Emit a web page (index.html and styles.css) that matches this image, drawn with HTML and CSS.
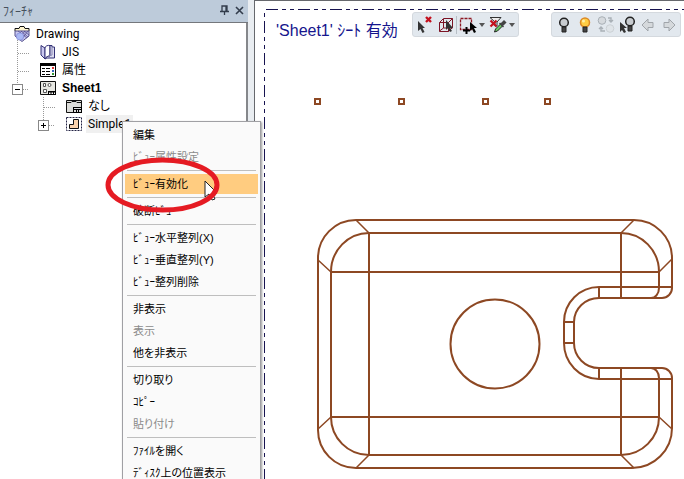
FILE: index.html
```html
<!DOCTYPE html>
<html lang="ja">
<head>
<meta charset="utf-8">
<title>Drawing</title>
<link rel="stylesheet" href="styles.css">
</head>
<body>
<div class="app">
  <aside class="panel">
    <header class="panel-head">
      <h1 class="panel-title">ﾌｨｰﾁｬ</h1>
      <button class="head-btn" type="button" aria-label="固定"><svg width="9" height="11" viewBox="0 0 9 11"><path d="M2 6V1h5v5M0 6.500h9M4.500 7v3M6 1v5" fill="none" stroke="#333d4c" stroke-width="1.300"/></svg></button>
      <button class="head-btn" type="button" aria-label="閉じる"><svg width="9" height="9" viewBox="0 0 9 9"><path d="M1 1l7 7M8 1L1 8" stroke="#333d4c" stroke-width="1.600"/></svg></button>
    </header>
    <div class="tree">
      <svg class="tree-lines" width="60" height="112" viewBox="0 0 60 112"><path d="M17.500 17v48M18 30.500h11M18 48.500h11M23 66.500h6M43.500 74v26M44 84.500h11M49 102.500h6" fill="none" stroke="#999" stroke-dasharray="1 1"/></svg>
      <ul class="nodes">
        <li class="node root"><svg class="icon" viewBox="0 0 16 16"><path d="M1 5V2.500h4l1-2h4l1 2h4V5" fill="#fff6cf" stroke="#111"/><path d="M1 5h14v5l-7 5.500L1 10z" fill="#c9c9f0" stroke="#55518d"/><path d="M4 5l9 7M7 5l7 6M10 5l5 4M14 5L7 14M11 5l-4 5M8 5L5 8" stroke="#554f91" stroke-width=".8"/><circle cx="6" cy="10.500" r="3.700" fill="#a9b8f5" stroke="#7a7fd0" stroke-width=".6"/></svg><span class="label">Drawing</span></li>
        <li class="node level1"><svg class="icon" viewBox="0 0 16 16"><path d="M1 1.500l4 2.500v11l-4-4z" fill="#cbc9ef" stroke="#333076"/><path d="M5 4c0-2 3-3 5-2.500V12c-2 0-4 1-5 3z" fill="#fff" stroke="#333076"/><path d="M10 1.500h2V3h2.500v11H9c-2 0-3 .500-4 1 1-2 3-3 5-3z" fill="#dcdcef" stroke="#333076"/><path d="M12 3v8l-3 1" fill="none" stroke="#8886b5"/></svg><span class="label">JIS</span></li>
        <li class="node level1"><svg class="icon" viewBox="0 0 16 16"><path d="M.5 1.500h15v13H.5z" fill="#fff" stroke="#000"/><path d="M0 1h16v3H0z"/><path d="M2 6.500h3M6 6.500h4M2 9.500h3M6 9.500h4M2 12.500h3M6 12.500h4" stroke="#000"/><path d="M12 5h2v2h-2z" fill="#d33"/><path d="M12 8h2v2h-2z" fill="#36b"/><path d="M12 11h2v2h-2z" fill="#393"/></svg><span class="label">属性</span></li>
        <li class="node level1"><svg class="icon" viewBox="0 0 16 16"><path d="M.5 1.500h15v13H.5z" fill="#e8e8e3" stroke="#111"/><g fill="#fff" stroke="#555"><path d="M3.500 3.500h2v3h-2zM3.500 9.500h3v3h-3z"/><circle cx="9.500" cy="5" r="1.500"/></g><path d="M8 11h8v4H8z"/><path d="M9 12.500h1.500V14H9zM11.500 12.500H13V14h-1.500zM14 12.500h1V14h-1z" fill="#fff"/></svg><span class="label strong">Sheet1</span></li>
        <li class="node level2"><svg class="icon" viewBox="0 0 16 16"><path d="M.5 2.500h15v12H.5z" fill="#ddddda" stroke="#111"/><path d="M1 4.500h4l1-1h4l1 1h4" fill="none" stroke="#111"/><path d="M7 9h9v6H7z"/><path d="M8 10h7v1H8zM8 12h2v2H8zM11 12h1v2h-1zM13 12h2v2h-2z" fill="#ddd"/></svg><span class="label">なし</span></li>
        <li class="node level2"><svg class="icon" viewBox="0 0 16 16"><path d="M.5 1.500h15v13H.5z" fill="#fff" stroke="#224" stroke-dasharray="2 1"/><path d="M7.500 3.500h5v9h-9v-4h4z" fill="#fbd3ac" stroke="#111"/></svg><span class="label selected">Simple1</span></li>
      </ul>
      <button class="toggle toggle-sheet" type="button" aria-label="折りたたむ"></button>
      <button class="toggle toggle-view closed" type="button" aria-label="展開"></button>
    </div>
  </aside>
  <main class="canvas">
    <svg class="drawing" width="430" height="479" viewBox="254 0 430 479">
      <g fill="none" stroke="#171350" stroke-dasharray="12 4 4 4 4 4"><path d="M266 9.500H684"/><path d="M264.500 9V479" stroke-dashoffset="20"/></g>
      <g class="geometry">
        <path d="M315 98h5v5h-5zM399 98h5v5h-5zM483 98h5v5h-5zM545 98h5v5h-5z" transform="translate(0 1)"/>
        <path d="M662 298H599A25 24 0 0 0 574 322V343A25 25 0 0 0 599 368H662A10 10 0 0 1 672 378V428A40 40 0 0 1 632 468H356A38 38 0 0 1 318 430V258A38 38 0 0 1 356 220H634A38 38 0 0 1 672 258V288A10 10 0 0 1 662 298"/>
        <path d="M651 298A8 10 0 0 0 659 288V272A38 39 0 0 0 621 233H369A38 39 0 0 0 331 272V417A38 38 0 0 0 369 455H621A38 38 0 0 0 659 417V378A8 10 0 0 0 651 368"/>
        <path d="M672 287H599A35 35 0 0 0 564 322V343A35 36 0 0 0 599 379H672"/>
        <path d="M331 272H659M331 417H659M369 233V455M621 233V298M621 368V455M599 287v11M599 368v11M564 322h10M564 343h10"/>
        <path class="thin" d="M318 260l13 12M356 220l13 13M634 220l-13 13M672 259l-13 13M318 429l13-12M356 468l13-13M634 468l-13-13M672 429l-13-12"/>
        <circle cx="495" cy="344" r="44.500"/>
      </g>
    </svg>
    <p class="sheet-name">'Sheet1' ｼｰﾄ 有効</p>
    <div class="toolbar toolbar-select">
      <button class="tool" type="button" aria-label="選択解除"><svg width="18" height="18" viewBox="0 0 18 18"><path class="cursor" d="M2 5v10l2.500-2 2 4 2-1-2-4H9z"/><path d="M10 1l5 5M15 1l-5 5" stroke="#c4101d" stroke-width="2.400"/></svg></button>
      <button class="tool" type="button" aria-label="要素選択"><svg width="18" height="18" viewBox="0 0 18 18"><path d="M2.500 6.500h9v9h-9zM2.500 6.500l4-4h9v9l-4 4M11.500 6.500l4-4M6.500 3v9h9M6.500 12l-4 3" fill="none" stroke="#7d1425"/><path class="cursor" d="M9 4v10l2-2 2 4 2-1-2-3h3z"/></svg></button>
      <span class="divider"></span>
      <button class="tool tool-wide" type="button" aria-label="範囲選択"><svg width="18" height="18" viewBox="0 0 18 18"><path d="M1.500 2.500h11v11h-11z" fill="none" stroke="#8d1722" stroke-width="1.300" stroke-dasharray="3 1"/><path d="M4 14.500h7M7.500 11v7" stroke="#000" stroke-width="2"/><path d="M11 6v9l2-2 2 4 2-1-2-4h3z"/></svg><span class="arrow"></span></button>
      <button class="tool tool-wide" type="button" aria-label="フィルタ"><svg width="18" height="18" viewBox="0 0 18 18"><path d="M1 1.500h11L8 6v4H6V6z" fill="#eee" stroke="#333"/><path d="M1.500 4.500l6 6M7.500 4.500l-6 6" stroke="#c4101d" stroke-width="2.200"/><path d="M5.500 16l1-3 5-5 2 2-5 5z" fill="#6ccc63" stroke="#222"/><path d="M10.500 7l4 4M12 8l3-3 1.500 1.500-3 3z" fill="#444" stroke="#444" stroke-width="1.500"/></svg><span class="arrow"></span></button>
    </div>
    <div class="toolbar toolbar-view">
      <button class="tool" type="button" aria-label="非表示"><svg width="18" height="18" viewBox="0 0 18 18"><circle cx="9" cy="6.500" r="4.300" fill="#c8ccd0" stroke="#222" stroke-width="1.500"/><path d="M7 11h4v5H7z" fill="#444" stroke="#222"/></svg></button>
      <button class="tool" type="button" aria-label="表示"><svg width="18" height="18" viewBox="0 0 18 18"><circle cx="9" cy="6.500" r="4.500" fill="#ffcd45" stroke="#dc8925" stroke-width="1.500"/><circle cx="7.500" cy="5" r="1.500" fill="#fff0a8"/><path d="M7 11h4v5H7z" fill="#444" stroke="#222"/></svg></button>
      <button class="tool" type="button" aria-label="切り替え" disabled><svg width="18" height="18" viewBox="0 0 18 18"><g fill="#d6dade" stroke="#a9b0b6"><circle cx="5" cy="4.500" r="3.800"/><circle cx="13" cy="12.500" r="3.800" fill="#dfe4e8" stroke="#ccd1d5"/><path d="M11 2h3v4m-2-2l2 2 2-2M8 15H4v-4m-2 2l2-2 2 2" fill="none" stroke-width="1.400"/></g></svg></button>
      <button class="tool" type="button" aria-label="選択表示"><svg width="18" height="18" viewBox="0 0 18 18"><circle cx="12" cy="5.500" r="4.300" fill="#c8ccd0" stroke="#222" stroke-width="1.500"/><path d="M10 10h4v5h-4z" fill="#444" stroke="#222"/><path class="cursor" d="M2 6v10l2-2 2 3 2-1-2-4h3z"/></svg></button>
      <button class="tool" type="button" aria-label="戻る" disabled><svg width="18" height="18" viewBox="0 0 18 18"><path d="M3 9l6-6v3.500h5v5H9V15z" fill="#d5d9dc" stroke="#a0a5aa"/></svg></button>
      <button class="tool" type="button" aria-label="進む" disabled><svg width="18" height="18" viewBox="0 0 18 18"><path d="M15 9L9 3v3.500H4v5h5V15z" fill="#d5d9dc" stroke="#a0a5aa"/></svg></button>
    </div>
  </main>
</div>
<div class="menu" role="menu">
  <button class="item" type="button" role="menuitem">編集</button>
  <button class="item" type="button" role="menuitem" disabled>ﾋﾞｭｰ属性設定</button>
  <hr>
  <button class="item active" type="button" role="menuitem">ﾋﾞｭｰ有効化</button>
  <hr>
  <button class="item" type="button" role="menuitem">破断ﾋﾞｭｰ</button>
  <hr>
  <button class="item" type="button" role="menuitem">ﾋﾞｭｰ水平整列(X)</button>
  <button class="item" type="button" role="menuitem">ﾋﾞｭｰ垂直整列(Y)</button>
  <button class="item" type="button" role="menuitem">ﾋﾞｭｰ整列削除</button>
  <hr>
  <button class="item" type="button" role="menuitem">非表示</button>
  <button class="item" type="button" role="menuitem" disabled>表示</button>
  <button class="item" type="button" role="menuitem">他を非表示</button>
  <hr>
  <button class="item" type="button" role="menuitem">切り取り</button>
  <button class="item" type="button" role="menuitem">ｺﾋﾟｰ</button>
  <button class="item" type="button" role="menuitem" disabled>貼り付け</button>
  <hr>
  <button class="item" type="button" role="menuitem">ﾌｧｲﾙを開く</button>
  <button class="item" type="button" role="menuitem">ﾃﾞｨｽｸ上の位置表示</button>
</div>
<svg class="callout" width="120" height="62" viewBox="0 0 120 62"><path d="M101 27v16l4-3 3 6 3-1-3-6h5z" fill="#fff" stroke="#222"/><ellipse cx="58.500" cy="31" rx="54.500" ry="25" fill="none" stroke="#e51b23" stroke-width="5"/></svg>
</body>
</html>
```
FILE: styles.css
```css
* { box-sizing: border-box; }
body {
  margin: 0;
  position: relative;
  height: 100vh;
  overflow: hidden;
  background: #e9edf1;
  color: #000;
  font-family: "Liberation Sans", "Noto Sans CJK JP", sans-serif;
  font-size: 12px;
  font-feature-settings: "palt";
}
button { border: 0; padding: 0; background: none; font: inherit; color: inherit; font-feature-settings: inherit; }
svg { display: block; flex: none; }
.app { display: flex; gap: 6px; height: 100%; }
.panel { flex: none; width: 248px; display: flex; flex-direction: column; }
.panel-head {
  display: flex; align-items: center; gap: 6px;
  height: 23px; padding: 0 4px 2px 3px;
  background: #bdcbda; border-bottom: 1px solid #74777c;
}
.panel-title { flex: 1; margin: 0; font-size: 12px; font-weight: 400; color: #46505c; }
.head-btn { display: grid; place-items: center; }
.tree { position: relative; flex: 1; background: #fff; border-right: 2px solid #85878b; }
.tree-lines { position: absolute; left: 0; top: 0; }
.nodes { position: relative; margin: 0; padding: 2px 0; list-style: none; }
.node { display: flex; align-items: center; gap: 4px; height: 18px; font-size: 12px; }
.root { padding-left: 14px; }
.level1 { padding-left: 40px; }
.level2 { padding-left: 66px; }
.icon { width: 16px; height: 16px; }
.label { padding: 0 2px; line-height: 18px; font-family: Roboto, "Noto Sans CJK JP", sans-serif; }
.strong { font-family: "Liberation Sans", sans-serif; font-weight: 700; }
.selected { background: #f0f0f0; }
.toggle { position: absolute; width: 11px; height: 11px; border: 1px solid #888; background: #fff; }
.toggle::before, .toggle.closed::after { content: ""; position: absolute; left: 2px; top: 4px; width: 5px; height: 1px; background: #000; }
.toggle.closed::after { left: 4px; top: 2px; width: 1px; height: 5px; }
.toggle-sheet { left: 12px; top: 61px; }
.toggle-view { left: 38px; top: 97px; }
.canvas { position: relative; flex: 1; overflow: hidden; background: #fff; border-top: 1px solid #66686d; box-shadow: inset 1px 0 #66686d; }
.drawing { margin-top: -1px; }
.geometry { fill: none; stroke: #8d4823; stroke-width: 2; }
.thin { stroke-width: 1.5; }
.sheet-name { position: absolute; left: 22px; top: 20px; margin: 0; font-size: 16px; line-height: 20px; color: #15158d; white-space: nowrap; }
.toolbar { position: absolute; top: 11px; display: flex; align-items: center; height: 25px; padding: 0 1px; background: #e2e8ee; border: 1px solid #d4d9de; border-radius: 3px; }
.toolbar-select { left: 158px; }
.toolbar-view { left: 297px; }
.tool { display: flex; align-items: center; justify-content: center; width: 21px; height: 22px; }
.tool-wide { width: 30px; gap: 2px; }
.divider { width: 1px; height: 18px; background: #b7bec5; }
.cursor { fill: #333; }
.arrow { border: 3px solid transparent; border-top: 4px solid #555; border-bottom: 0; }
.menu {
  position: absolute; left: 122px; top: 121px; width: 139px;
  display: flex; flex-direction: column;
  padding: 2px; background: #fafafa; border: 1px solid #a0a0a4;
  box-shadow: 1px 1px 2px #999;
}
.item { flex: none; height: 20px; margin: 1px 0; padding: 0 8px; font-size: 11px; line-height: 18px; text-align: left; white-space: nowrap; }
.item:disabled { color: #8b8b8b; }
.active { background: #ffcc80; }
.menu hr { flex: none; height: 1px; margin: 2px; border: 0; background: #bebebe; }
.callout { position: absolute; left: 104px; top: 154px; }
```
